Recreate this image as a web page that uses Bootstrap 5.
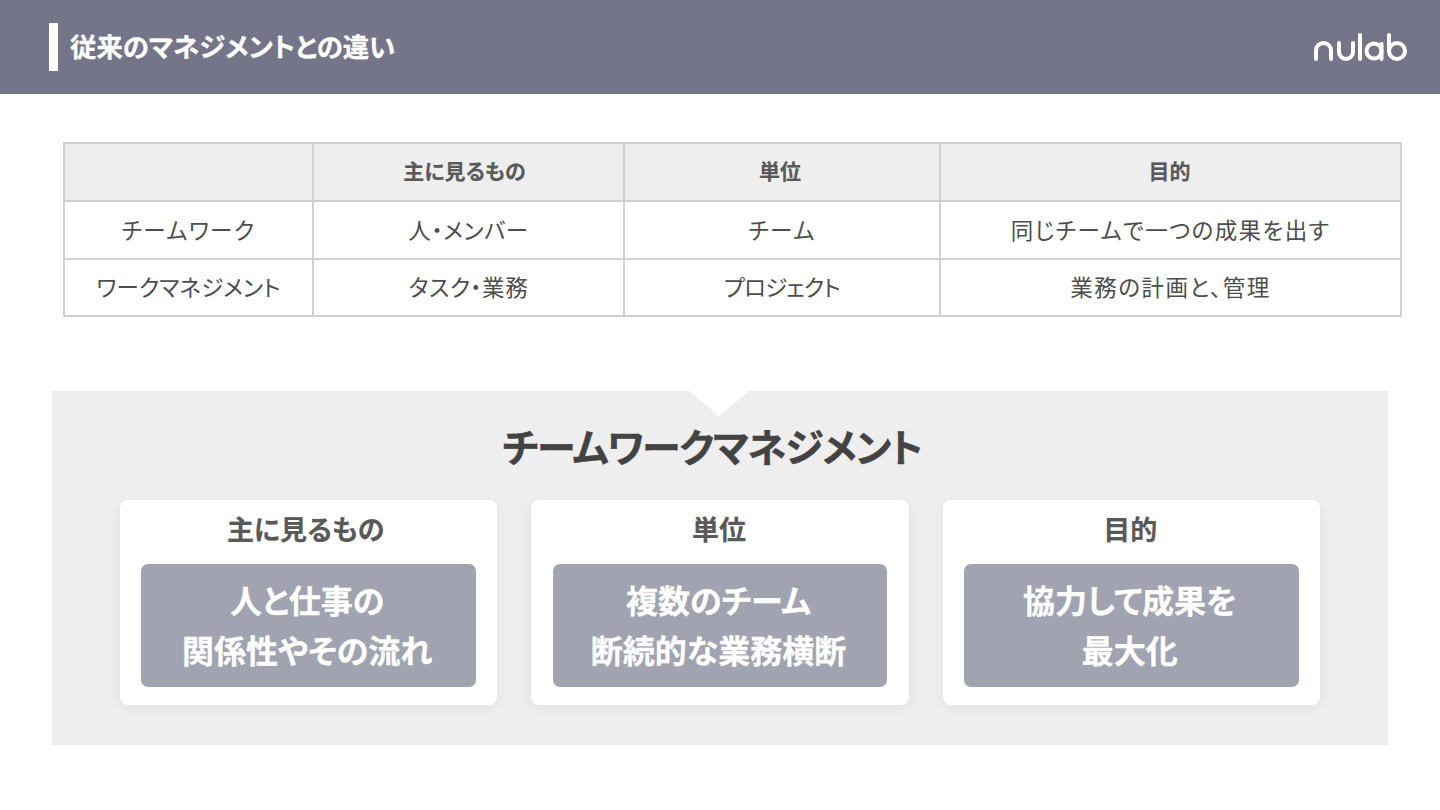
<!DOCTYPE html>
<html lang="ja"><head><meta charset="utf-8">
<link href="https://cdn.jsdelivr.net/npm/bootstrap@5.3.0/dist/css/bootstrap.min.css" rel="stylesheet">
<style>
html,body{height:810px;overflow:hidden;background:#fff}
body{font-family:"Noto Sans CJK JP","Liberation Sans",sans-serif;color:#434343;font-feature-settings:"palt"}
.slide-head{height:94px;background:#757589;padding:23px 31px 0 49px}
.head-bar{width:9px;height:48px;background:#fff}
.head-title{font-size:26.4px;font-weight:700;color:#fff;line-height:46px;margin:0 0 0 12px;-webkit-text-stroke:.3px #fff}
.cmp-wrap{padding:48px 39px 0 63px}
.cmp-table{table-layout:fixed;width:1337px;margin:0;border-color:#d0d0d0;border-width:2px}
.cmp-table td,.cmp-table th{border:2px solid #d0d0d0;text-align:center;vertical-align:middle;padding:0 0 3px;font-size:22.5px;font-weight:400;color:#4d4d4d;line-height:1.2;letter-spacing:.6px}
.cmp-table th{background:#eeeeee;font-size:21px;font-weight:700;color:#595959;letter-spacing:0;-webkit-text-stroke:.2px #595959}
.cmp-table .row-head{height:58px}
.cmp-table .row-a td{height:58px;padding-bottom:1px}
.cmp-table .row-b td{height:57px}
.cmp-table th.shift-lg{padding-right:8px}
.cmp-table th.shift-sm{padding-right:4px}
.cmp-table th.shift-xs{padding-right:2px}
.cmp-table td.ls-wide{letter-spacing:1.4px}
.cmp-table td.ls-tight{letter-spacing:-.8px}
.cmp-table td.ls-plan{letter-spacing:1.5px}
.cmp-table td.ls-fit{letter-spacing:.1px}
.team-panel{position:relative;margin:74px 52px 0 52px;height:354px;background:#eeeeee}
.panel-notch{position:absolute;left:637px;top:0;width:0;height:0;border-left:30px solid transparent;border-right:30px solid transparent;border-top:25px solid #fff}
.panel-title{font-size:39px;font-weight:700;color:#434343;text-align:center;margin:0;padding-top:25px;height:109px;line-height:58px;padding-right:16px;letter-spacing:-1.2px;-webkit-text-stroke:.4px #434343}
.fact-row{padding:0 68px;gap:34px}
.fact-card{width:377.5px;height:205px;background:#fff;border-radius:8px;box-shadow:0 3px 14px rgba(0,0,0,.06);padding:0 21px}
.fact-card.card-mid{padding:0 22px}
.fact-label{font-size:27px;font-weight:700;color:#595959;text-align:center;line-height:58px;height:64px;margin:0;padding-right:2px;-webkit-text-stroke:.2px #595959}
.fact-label.label-shift{padding-right:6px}
.fact-box{height:123px;background:#a1a3b1;border-radius:7px;color:#fff;font-size:32px;font-weight:700;line-height:50px;text-align:center;padding:10px 3px 0 0;-webkit-text-stroke:.3px #fff}
.nulab-logo{width:95px;height:28px;margin-top:10px}
</style></head>
<body>
<header class="slide-head d-flex align-items-start">
  <div class="head-bar"></div>
  <h1 class="head-title">従来のマネジメントとの違い</h1>
  <svg class="nulab-logo ms-auto" viewBox="0 0 95 28" fill="none" stroke="#fff" stroke-width="4" stroke-linecap="round" stroke-linejoin="round" role="img" aria-label="nulab">
    <path d="M2 26V17.5a7.5 7.5 0 0 1 15 0V26"/>
    <path d="M25 10v9a7 7 0 0 0 14 0v-9"/>
    <path d="M46 2v24"/>
    <circle cx="60" cy="18" r="7.5"/><path d="M67.5 11v15"/>
    <circle cx="83" cy="18" r="8"/><path d="M75 2v16"/>
  </svg>
</header>
<div class="cmp-wrap">
  <table class="table cmp-table">
    <colgroup><col style="width:249px"><col style="width:311px"><col style="width:316px"><col style="width:461px"></colgroup>
    <tr class="row-head"><th></th><th class="shift-lg">主に見るもの</th><th class="shift-sm">単位</th><th class="shift-xs">目的</th></tr>
    <tr class="row-a"><td class="ls-wide">チームワーク</td><td>人・メンバー</td><td class="ls-wide">チーム</td><td class="ls-wide">同じチームで一つの成果を出す</td></tr>
    <tr class="row-b"><td class="ls-fit">ワークマネジメント</td><td>タスク・業務</td><td class="ls-tight">プロジェクト</td><td class="ls-plan">業務の計画と、管理</td></tr>
  </table>
</div>
<section class="team-panel">
  <div class="panel-notch"></div>
  <h2 class="panel-title">チームワークマネジメント</h2>
  <div class="fact-row d-flex">
    <div class="fact-card"><p class="fact-label label-shift">主に見るもの</p><div class="fact-box">人と仕事の<br>関係性やその流れ</div></div>
    <div class="fact-card card-mid"><p class="fact-label">単位</p><div class="fact-box">複数のチーム<br>断続的な業務横断</div></div>
    <div class="fact-card"><p class="fact-label">目的</p><div class="fact-box">協力して成果を<br>最大化</div></div>
  </div>
</section>
<script src="https://cdn.jsdelivr.net/npm/bootstrap@5.3.0/dist/js/bootstrap.bundle.min.js"></script>
</body></html>
